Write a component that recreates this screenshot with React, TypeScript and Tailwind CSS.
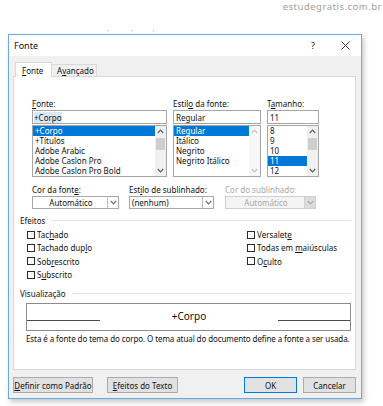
import React from "react";

const U = ({ children }: { children: React.ReactNode }) => (
  <span className="underline underline-offset-[1px]">{children}</span>
);

const Chevron = ({ dir, color }: { dir: "up" | "down"; color: string }) => (
  <svg width="7" height="5" viewBox="0 0 7 5" className="block">
    {dir === "up" ? (
      <polyline points="0.8,4 3.5,1.2 6.2,4" fill="none" stroke={color} strokeWidth="1.2" />
    ) : (
      <polyline points="0.8,1 3.5,3.8 6.2,1" fill="none" stroke={color} strokeWidth="1.2" />
    )}
  </svg>
);

function ListBox({
  items,
  selected,
  widthClass,
  enabled,
}: {
  items: string[];
  selected: number;
  widthClass: string;
  enabled: boolean;
}) {
  return (
    <div className={`mt-[1px] h-[52px] ${widthClass} border border-[#a5a5a5] bg-white flex overflow-hidden`}>
      <div className="flex-1 flex flex-col">
        {items.map((it, i) => (
          <div
            key={it}
            className={`h-[10px] leading-[10px] pl-[2px] whitespace-nowrap ${
              i === selected ? "bg-[#0078d7] text-white" : ""
            }`}
          >
            {it}
          </div>
        ))}
      </div>
      <div className={`w-[11px] flex flex-col items-center ${enabled ? "bg-[#f0f0f0]" : "bg-[#f7f7f7]"}`}>
        <div className="h-[11px] flex items-center justify-center">
          <Chevron dir="up" color={enabled ? "#606060" : "#c4c4c4"} />
        </div>
        <div className="flex-1 w-full flex flex-col items-center pt-[1px]">
          {enabled && <div className="w-[9px] h-[12px] bg-[#cdcdcd]" />}
        </div>
        <div className="h-[11px] flex items-center justify-center">
          <Chevron dir="down" color={enabled ? "#606060" : "#c4c4c4"} />
        </div>
      </div>
    </div>
  );
}

function Dropdown({
  text,
  widthClass,
  center,
  disabled,
}: {
  text: string;
  widthClass: string;
  center?: boolean;
  disabled?: boolean;
}) {
  return (
    <div
      className={`mt-[1px] h-[13px] ${widthClass} border flex ${
        disabled ? "border-[#cfcfcf] bg-[#f4f4f4] text-[#a8a8a8]" : "border-[#a8a8a8] bg-white"
      }`}
    >
      <div className={`flex-1 leading-[11px] pl-[2px] ${center ? "text-center" : ""}`}>{text}</div>
      <div
        className={`w-[11px] border-l flex items-center justify-center ${
          disabled ? "border-[#d0d0d0] bg-[#dcdcdc]" : "border-[#bdbdbd] bg-white"
        }`}
      >
        <Chevron dir="down" color={disabled ? "#ababab" : "#707070"} />
      </div>
    </div>
  );
}

const Check = ({ children }: { children: React.ReactNode }) => (
  <div className="h-[13.3px] flex items-center">
    <div className="w-[8px] h-[8px] border border-[#2a2a2a] bg-white" />
    <span className="ml-[2px] leading-[11px]">{children}</span>
  </div>
);

export default function App() {
  return (
    <div className="w-[383px] h-[406px] bg-white font-['Noto_Sans',sans-serif] text-[#111111] overflow-hidden">
      <div className="h-[34px] relative">
        <div className="absolute right-[1px] top-0 text-[9.5px] leading-[14px] tracking-[0.5px] text-[#a0a0a0]">
          estudegratis.com.br
        </div>
        <span className="absolute left-[107px] top-[30px] w-[1px] h-[1px] bg-[#b0b0b0]" />
        <span className="absolute left-[131px] top-[30px] w-[1px] h-[1px] bg-[#b0b0b0]" />
        <span className="absolute left-[153px] top-[30px] w-[1px] h-[1px] bg-[#b0b0b0]" />
      </div>

      <div className="ml-[8px] w-[354px] h-[365px] border border-[#6aa9e0] bg-[#f0f0f0] shadow-[2px_3px_5px_rgba(0,0,0,0.22)] flex flex-col text-[8px]">
        {/* Title bar */}
        <div className="h-[21px] shrink-0 bg-white flex items-center pl-[5px]">
          <span className="text-[9px]">Fonte</span>
          <span className="ml-auto text-[9px]">?</span>
          <svg width="9" height="9" viewBox="0 0 9 9" className="ml-[26px] mr-[11px]">
            <path d="M0.5 0.5 L8.5 8.5 M8.5 0.5 L0.5 8.5" stroke="#333" strokeWidth="1" />
          </svg>
        </div>

        {/* Tabs */}
        <div className="h-[20px] shrink-0 flex items-end pl-[6px]">
          <div className="relative z-10 -mb-[1px] h-[15px] w-[37px] bg-white border border-b-0 border-[#d9d9d9] flex items-center pl-[6px] leading-[11px]">
            <span>
              <U>F</U>onte
            </span>
          </div>
          <div className="h-[12px] w-[45px] bg-[#f0f0f0] border border-l-0 border-b-0 border-[#d9d9d9] flex items-center pl-[5px] leading-[10px]">
            <span>
              A<U>v</U>ançado
            </span>
          </div>
        </div>

        {/* Panel */}
        <div className="ml-[4px] w-[343px] h-[294px] shrink-0 border border-[#d9d9d9] bg-white flex flex-col">
          {/* Row 1 */}
          <div className="pt-[21px] pl-[18px] flex">
            <div className="w-[135px] flex flex-col">
              <div className="h-[11px] leading-[11px]">
                <U>F</U>onte:
              </div>
              <div className="mt-[1px] h-[14px] border border-[#a5a5a5] flex items-center pl-[1px]">
                <span className="bg-[#dbe8f6] leading-[11px]">+Corpo</span>
              </div>
              <ListBox
                items={["+Corpo", "+Títulos", "Adobe Arabic", "Adobe Caslon Pro", "Adobe Caslon Pro Bold"]}
                selected={0}
                widthClass="w-[135px]"
                enabled
              />
            </div>
            <div className="ml-[6px] w-[88px] flex flex-col">
              <div className="h-[11px] leading-[11px]">
                Estil<U>o</U> da fonte:
              </div>
              <div className="mt-[1px] h-[14px] border border-[#a5a5a5] flex items-center pl-[2px] leading-[11px]">
                Regular
              </div>
              <ListBox
                items={["Regular", "Itálico", "Negrito", "Negrito Itálico"]}
                selected={0}
                widthClass="w-[88px]"
                enabled={false}
              />
            </div>
            <div className="ml-[6px] w-[52px] flex flex-col">
              <div className="h-[11px] leading-[11px]">
                T<U>a</U>manho:
              </div>
              <div className="mt-[1px] h-[14px] border border-[#a5a5a5] flex items-center pl-[2px] leading-[11px]">
                11
              </div>
              <ListBox items={["8", "9", "10", "11", "12"]} selected={3} widthClass="w-[52px]" enabled />
            </div>
          </div>

          {/* Row 2 */}
          <div className="mt-[7px] pl-[18px] flex">
            <div className="w-[87px] flex flex-col">
              <div className="h-[11px] leading-[11px]">
                Cor da font<U>e</U>:
              </div>
              <Dropdown text="Automático" widthClass="w-[87px]" center />
            </div>
            <div className="ml-[10px] w-[85px] flex flex-col">
              <div className="h-[11px] leading-[11px] whitespace-nowrap">
                Est<U>i</U>lo de sublinhado:
              </div>
              <Dropdown text="(nenhum)" widthClass="w-[85px]" />
            </div>
            <div className="ml-[11px] w-[91px] flex flex-col">
              <div className="h-[11px] leading-[11px] text-[#a8a8a8] whitespace-nowrap">Cor do sublinhado:</div>
              <Dropdown text="Automático" widthClass="w-[91px]" center disabled />
            </div>
          </div>

          {/* Efeitos */}
          <div className="mt-[6px] pl-[6px] pr-[4px] flex items-center h-[11px]">
            <span className="leading-[11px]">Efeitos</span>
            <div className="ml-[6px] flex-1 h-[1px] bg-[#e3e3e3]" />
          </div>
          <div className="mt-[2px] pl-[13px] flex">
            <div className="w-[220px] flex flex-col">
              <Check>
                Tac<U>h</U>ado
              </Check>
              <Check>
                Tachado dup<U>l</U>o
              </Check>
              <Check>
                Sob<U>r</U>escrito
              </Check>
              <Check>
                S<U>u</U>bscrito
              </Check>
            </div>
            <div className="flex flex-col">
              <Check>
                Versalet<U>e</U>
              </Check>
              <Check>
                Todas em <U>m</U>aiúsculas
              </Check>
              <Check>
                O<U>c</U>ulto
              </Check>
            </div>
          </div>

          {/* Visualização */}
          <div className="mt-[7px] pl-[6px] pr-[4px] flex items-center h-[11px]">
            <span className="leading-[11px]">Visualização</span>
            <div className="ml-[6px] flex-1 h-[1px] bg-[#e3e3e3]" />
          </div>
          <div className="mt-[4px] ml-[12px] w-[325px] h-[28px] border border-[#8c8c8c] pt-[5px]">
            <div className="h-[12px] flex items-end">
              <div className="w-[73px] border-b border-[#4a4a4a]" />
              <div className="flex-1 text-center text-[10px] leading-[12px] translate-y-[1px]">+Corpo</div>
              <div className="w-[72px] border-b border-[#4a4a4a]" />
            </div>
          </div>
          <div className="mt-[2px] ml-[12px] h-[11px] leading-[11px] whitespace-nowrap tracking-[-0.09px]">
            Esta é a fonte do tema do corpo. O tema atual do documento define a fonte a ser usada.
          </div>
        </div>

        {/* Buttons */}
        <div className="mt-[7px] ml-[4px] mr-[5px] h-[16px] flex">
          <div className="w-[80px] h-[16px] bg-[#e1e1e1] border border-[#adadad] flex items-center justify-center leading-[11px]">
            <span>
              <U>D</U>efinir como Padrão
            </span>
          </div>
          <div className="ml-[14px] w-[71px] h-[16px] bg-[#e1e1e1] border border-[#adadad] flex items-center justify-center leading-[11px]">
            <span>
              <U>E</U>feitos do Texto
            </span>
          </div>
          <div className="ml-auto w-[53px] h-[16px] bg-[#e1e1e1] border border-[#0078d7] flex items-center justify-center leading-[11px]">
            OK
          </div>
          <div className="ml-[6px] w-[53px] h-[16px] bg-[#e1e1e1] border border-[#adadad] flex items-center justify-center leading-[11px]">
            Cancelar
          </div>
        </div>
      </div>
    </div>
  );
}
